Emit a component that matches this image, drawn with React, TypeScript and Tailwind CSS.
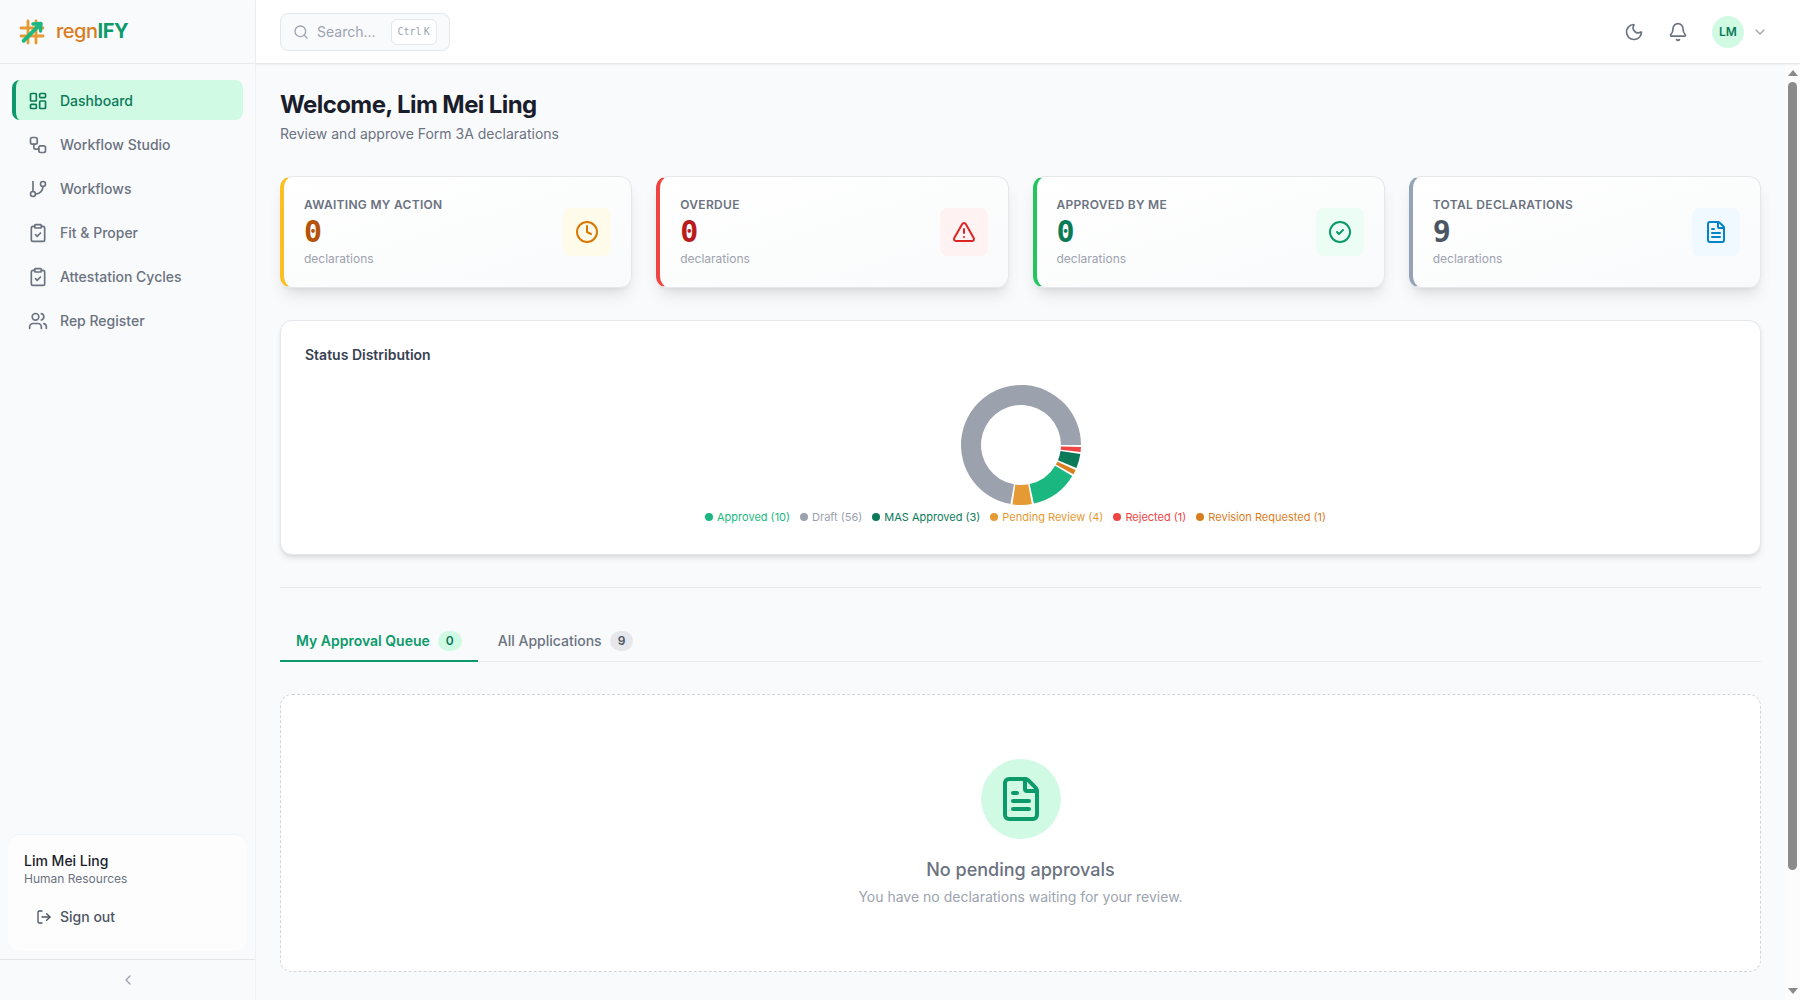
import { useState } from 'react'
import type { ReactNode } from 'react'
import {
  Bell,
  ChevronDown,
  ChevronLeft,
  CircleCheck,
  ClipboardCheck,
  Clock,
  FileText,
  GitBranch,
  LayoutDashboard,
  LogOut,
  Moon,
  Search,
  TriangleAlert,
  Users,
  Workflow,
} from 'lucide-react'

const navItems = [
  { label: 'Dashboard', icon: LayoutDashboard },
  { label: 'Workflow Studio', icon: Workflow },
  { label: 'Workflows', icon: GitBranch },
  { label: 'Fit & Proper', icon: ClipboardCheck },
  { label: 'Attestation Cycles', icon: ClipboardCheck },
  { label: 'Rep Register', icon: Users },
]

const stats = [
  { label: 'Awaiting my action', value: 0, icon: Clock, border: 'border-l-[#fbbf24]', number: 'text-[#b45309]', box: 'bg-[#fffbeb] text-[#d97706]' },
  { label: 'Overdue', value: 0, icon: TriangleAlert, border: 'border-l-[#ef4444]', number: 'text-[#b91c1c]', box: 'bg-[#fef2f2] text-[#dc2626]' },
  { label: 'Approved by me', value: 0, icon: CircleCheck, border: 'border-l-[#22c55e]', number: 'text-[#0b7a57]', box: 'bg-[#ecfdf5] text-[#0c9a6b]' },
  { label: 'Total declarations', value: 9, icon: FileText, border: 'border-l-[#94a3b8]', number: 'text-[#4b5563]', box: 'bg-[#f0f9ff] text-[#0284c7]' },
]

// slices run counter-clockwise from three o'clock
const slices = [
  { value: 56, color: '#9ca1ae' },
  { value: 4, color: '#e59a34' },
  { value: 10, color: '#1ab880' },
  { value: 1, color: '#d97d1e' },
  { value: 3, color: '#0c7a58' },
  { value: 1, color: '#ef4444' },
]

const legend = [
  { label: 'Approved (10)', text: 'text-[#1ab880]', dot: 'bg-[#1ab880]' },
  { label: 'Draft (56)', text: 'text-[#9ca1ae]', dot: 'bg-[#9ca1ae]' },
  { label: 'MAS Approved (3)', text: 'text-[#0c7a58]', dot: 'bg-[#0c7a58]' },
  { label: 'Pending Review (4)', text: 'text-[#e59a34]', dot: 'bg-[#e59a34]' },
  { label: 'Rejected (1)', text: 'text-[#ef4444]', dot: 'bg-[#ef4444]' },
  { label: 'Revision Requested (1)', text: 'text-[#d97d1e]', dot: 'bg-[#d97d1e]' },
]

const PAD_ANGLE = 2

function arcPath(start: number, end: number, outer: number, inner: number) {
  const point = (deg: number, r: number) => {
    const rad = (deg * Math.PI) / 180
    return `${60 + r * Math.cos(rad)} ${60 - r * Math.sin(rad)}`
  }
  const large = end - start > 180 ? 1 : 0
  return `M${point(start, outer)} A${outer} ${outer} 0 ${large} 0 ${point(end, outer)} L${point(end, inner)} A${inner} ${inner} 0 ${large} 1 ${point(start, inner)} Z`
}

function DonutChart() {
  const total = slices.reduce((sum, s) => sum + s.value, 0)
  const available = 360 - slices.length * PAD_ANGLE
  let angle = 0
  return (
    <svg viewBox="0 0 120 120" className="size-30" role="img" aria-label="Declarations by status">
      {slices.map((s) => {
        const start = angle
        const end = start + (s.value / total) * available
        angle = end + PAD_ANGLE
        return <path key={s.color} d={arcPath(start, end, 60, 40)} fill={s.color} />
      })}
    </svg>
  )
}

function Logo() {
  return (
    <a href="#" className="flex items-center gap-2">
      <svg viewBox="0 0 32 32" className="size-8" fill="none" strokeLinecap="round" aria-hidden="true">
        <path d="M12 5V27M20 5V27M5 12H27M5 20H27" stroke="#e59a34" strokeWidth="2.8" />
        <path d="M7.600 24.800L24 8.400" stroke="#1ab880" strokeWidth="3.8" />
        <path d="M17 8L25 7.500L24.600 15" stroke="#1ab880" strokeWidth="3.4" strokeLinejoin="round" />
      </svg>
      <span className="pb-px text-xl leading-7 font-medium tracking-tight text-[#d97d1e]">
        regn<span className="font-bold text-[#0c9a6b]">IFY</span>
      </span>
    </a>
  )
}

function Sidebar() {
  return (
    <aside className="flex w-64 shrink-0 flex-col border-r border-[#eff0f3]">
      <div className="flex h-16 items-center border-b border-[#e8eaed] px-4">
        <Logo />
      </div>
      <nav className="flex flex-1 flex-col gap-1 px-3 py-4">
        {navItems.map(({ label, icon: Icon }, i) => (
          <a
            key={label}
            href="#"
            className={
              i === 0
                ? 'flex h-10 items-center gap-3 rounded-lg border-l-4 border-[#0c9a6b] bg-[#d1fae5] px-3 pt-px text-sm font-medium text-[#0b7a57]'
                : 'flex h-10 items-center gap-3 rounded-lg border-l-4 border-transparent px-3 pt-px text-sm font-medium text-[#6b7280]'
            }
          >
            <Icon className="size-5" />
            {label}
          </a>
        ))}
      </nav>
      <div className="mx-2 mb-2 rounded-xl border-t border-[#f2f3f5] bg-[#fdfdfd] px-4 pt-4 pb-4">
        <p className="text-sm font-medium text-[#1a1d2b]">Lim Mei Ling</p>
        <p className="text-xs text-[#6b7280]">Human Resources</p>
        <button className="mt-3 flex w-full items-center gap-2 px-3 py-2 text-sm font-medium text-[#4b5563]">
          <LogOut className="size-4" />
          Sign out
        </button>
      </div>
      <button aria-label="Collapse sidebar" className="flex items-center justify-center border-t border-[#e5e7eb] py-3 text-[#9ca3af]">
        <ChevronLeft className="size-4" />
      </button>
    </aside>
  )
}

function Topbar() {
  return (
    <header className="z-10 flex h-16 shrink-0 items-center justify-between border-b border-[#e5e7eb] bg-white px-6 shadow-xs">
      <button className="flex items-center gap-2 rounded-lg border border-[#e5e7eb] bg-[#f9fafc] px-3 py-[5px] text-sm text-[#9ca3af]">
        <Search className="size-4" />
        <span>Search...</span>
        <kbd className="ml-[7px] flex h-[26px] items-center gap-[2px] rounded-md border border-[#e5e7eb] bg-white px-[6px] pt-px font-['DejaVu_Sans_Mono',monospace] text-[10px]">
          <span>Ctrl</span>
          <span>K</span>
        </kbd>
      </button>
      <div className="flex items-center gap-2 text-[#6b7280]">
        <button aria-label="Toggle dark mode" className="p-2">
          <Moon className="size-5" />
        </button>
        <button aria-label="Notifications" className="p-2">
          <Bell className="size-5" />
        </button>
        <button aria-label="Account menu" className="flex items-center gap-2 px-2">
          <span className="flex size-8 items-center justify-center rounded-full bg-[#d1fae5] text-xs font-semibold text-[#0b7a57]">LM</span>
          <ChevronDown className="size-4 text-[#9ca3af]" />
        </button>
      </div>
    </header>
  )
}

function StatCards() {
  return (
    <div className="grid grid-cols-4 gap-6">
      {stats.map(({ label, value, icon: Icon, border, number, box }) => (
        <div
          key={label}
          className={`flex items-center justify-between rounded-xl border border-l-4 border-[#e5e7eb] bg-linear-to-br from-white to-[#f9fafb] p-5 shadow-[0_10px_15px_-3px_rgba(0,0,0,0.1),0_4px_6px_-4px_rgba(0,0,0,0.1)] ${border}`}
        >
          <div>
            <p className="text-xs font-semibold tracking-wide text-[#6b7280] uppercase">{label}</p>
            <p className={`mt-1 font-['DejaVu_Sans_Mono',monospace] text-3xl leading-none font-bold ${number}`}>{value}</p>
            <p className="mt-1 text-xs text-[#9ca3af]">declarations</p>
          </div>
          <div className={`flex size-12 items-center justify-center rounded-lg ${box}`}>
            <Icon className="size-6" />
          </div>
        </div>
      ))}
    </div>
  )
}

function StatusDistribution() {
  return (
    <section className="mt-8 rounded-xl border border-[#e5e7eb] bg-white p-6 shadow-[0_4px_6px_-1px_rgba(0,0,0,0.1),0_2px_4px_-2px_rgba(0,0,0,0.1)]">
      <h2 className="text-sm font-semibold text-[#374151]">Status Distribution</h2>
      <div className="mt-5 flex flex-col items-center pb-[5px]">
        <DonutChart />
        <ul className="mt-1 flex text-[11px] leading-4">
          {legend.map(({ label, text, dot }) => (
            <li key={label} className={`mr-[10px] flex items-center gap-1 ${text}`}>
              <span className={`size-2 rounded-full ${dot}`} />
              {label}
            </li>
          ))}
        </ul>
      </div>
    </section>
  )
}

function Tab({ active, count, onClick, children }: { active: boolean; count: number; onClick: () => void; children: ReactNode }) {
  return (
    <button
      role="tab"
      aria-selected={active}
      onClick={onClick}
      className={
        active
          ? '-mb-px flex items-center gap-2 border-b-2 border-[#0c9a6b] px-4 pt-[11px] pb-[9px] text-sm font-semibold text-[#0c9a6b]'
          : '-mb-px flex items-center gap-2 border-b-2 border-transparent px-4 pt-[11px] pb-[9px] text-sm font-medium text-[#6b7280]'
      }
    >
      {children}
      <span
        className={
          active
            ? 'rounded-full bg-[#d1fae5] px-2 py-[2px] text-xs font-semibold text-[#0b7a57]'
            : 'rounded-full bg-[#e5e7eb] px-2 py-[2px] text-xs font-semibold text-[#4b5563]'
        }
      >
        {count}
      </span>
    </button>
  )
}

function ScrollRail() {
  return (
    <div className="flex w-[15px] shrink-0 flex-col items-center bg-[#fcfcfc] py-[6px] text-[#8b8b8b]" aria-hidden="true">
      <svg viewBox="0 0 10 6" className="h-[6px] w-[10px]" fill="currentColor">
        <path d="M0 6L5 0L10 6Z" />
      </svg>
      <div className="my-[6px] w-[9px] flex-1">
        <div className="h-7/8 rounded-full bg-[#8b8b8b]" />
      </div>
      <svg viewBox="0 0 10 6" className="h-[6px] w-[10px]" fill="currentColor">
        <path d="M0 0L5 6L10 0Z" />
      </svg>
    </div>
  )
}

export default function App() {
  const [tab, setTab] = useState('queue')

  return (
    <div className="flex h-screen bg-[#f9fafc] font-['Inter',sans-serif] text-[#1a1d2b]">
      <Sidebar />
      <div className="flex min-w-0 flex-1 flex-col">
        <Topbar />
        <div className="flex min-h-0 flex-1">
          <main className="min-w-0 flex-1 overflow-y-auto px-6 pt-6 pb-40 [scrollbar-width:none]">
            <h1 className="text-2xl leading-[34px] font-bold tracking-tight">Welcome, Lim Mei Ling</h1>
            <p className="mt-[2px] mb-8 text-sm text-[#6b7280]">Review and approve Form 3A declarations</p>
            <StatCards />
            <StatusDistribution />
            <hr className="my-8 border-[#e5e7eb]" />
            <div role="tablist" className="flex gap-1 border-b border-[#e9ebee]">
              <Tab active={tab === 'queue'} count={0} onClick={() => setTab('queue')}>My Approval Queue</Tab>
              <Tab active={tab === 'all'} count={9} onClick={() => setTab('all')}>All Applications</Tab>
            </div>
            <section className="mt-8 flex flex-col items-center rounded-xl border border-dashed border-[#d1d5db] bg-white py-16">
              <div className="flex size-20 items-center justify-center rounded-full bg-[#d1fae5] text-[#0c9a6b]">
                <FileText className="size-12" />
              </div>
              <h3 className="mt-4 text-lg leading-[30px] font-medium text-[#6b7280]">No pending approvals</h3>
              <p className="mt-[2px] text-sm text-[#9ca3af]">You have no declarations waiting for your review.</p>
            </section>
          </main>
          <ScrollRail />
        </div>
      </div>
    </div>
  )
}
